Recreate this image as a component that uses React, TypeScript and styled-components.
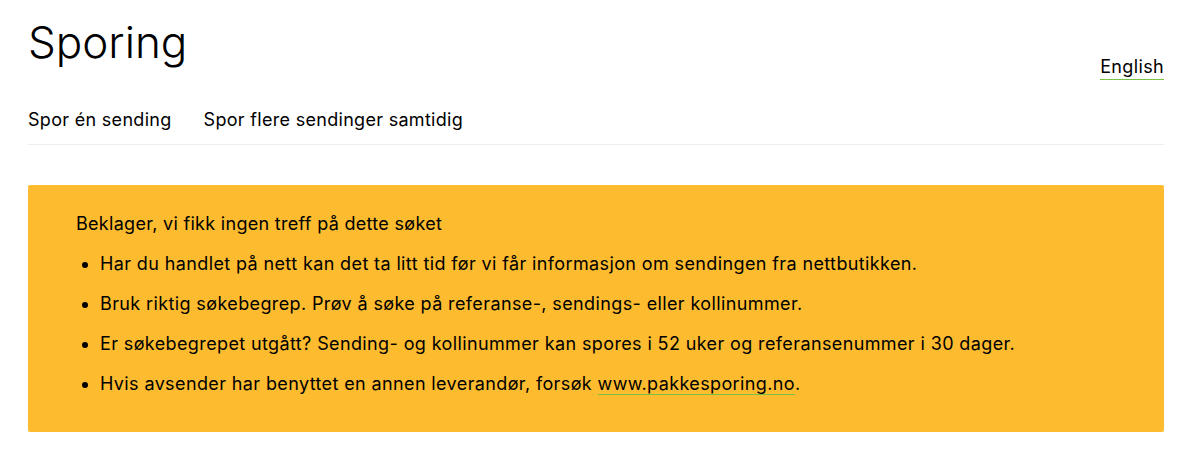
import React from "react";
import styled, { createGlobalStyle } from "styled-components";

const Global = createGlobalStyle`
  html, body { margin: 0; padding: 0; background: #fff; }
  body { font-family: Inter, "Noto Sans", sans-serif; color: #000; }
`;

const Page = styled.div`
  padding: 0 33px 0 28px;
`;

const Header = styled.header`
  display: flex;
  justify-content: space-between;
  align-items: flex-end;
`;

const Title = styled.h1`
  margin: 14px 0 0;
  font-size: 44px;
  font-weight: 300;
  line-height: 56px;
  letter-spacing: 0;
`;

const LangLink = styled.a`
  font-size: 18px;
  line-height: 24px;
  letter-spacing: 0.35px;
  color: #000;
  text-decoration: none;
  border-bottom: 1px solid #7bc144;
  margin-bottom: -10px;
`;

const Tabs = styled.nav`
  display: flex;
  gap: 32px;
  margin-top: 38px;
  padding-bottom: 12px;
  border-bottom: 1px solid #eeeeee;
`;

const Tab = styled.a`
  font-size: 18px;
  line-height: 24px;
  letter-spacing: 0.3px;
  color: #000;
  text-decoration: none;
`;

const Notice = styled.section`
  margin-top: 40px;
  background: #fdbb30;
  border-radius: 2px;
  padding: 25px 48px 34px;
  height: 247px;
  box-sizing: border-box;
`;

const NoticeTitle = styled.p`
  margin: 0;
  font-size: 18px;
  line-height: 28px;
  letter-spacing: 0.3px;
`;

const List = styled.ul`
  margin: 12px 0 0;
  padding-left: 24px;
`;

const Item = styled.li`
  font-size: 18px;
  line-height: 28px;
  letter-spacing: 0.38px;
  margin-bottom: 12px;
  padding-left: 0;
`;

const Link = styled.a`
  color: #000;
  text-decoration: none;
  border-bottom: 1px solid #7bc144;
`;

export default function App() {
  return (
    <>
      <Global />
      <Page>
        <Header>
          <Title>Sporing</Title>
          <LangLink href="#">English</LangLink>
        </Header>
        <Tabs>
          <Tab href="#">Spor én sending</Tab>
          <Tab href="#">Spor flere sendinger samtidig</Tab>
        </Tabs>
        <Notice>
          <NoticeTitle>Beklager, vi fikk ingen treff på dette søket</NoticeTitle>
          <List>
            <Item>Har du handlet på nett kan det ta litt tid før vi får informasjon om sendingen fra nettbutikken.</Item>
            <Item>Bruk riktig søkebegrep. Prøv å søke på referanse-, sendings- eller kollinummer.</Item>
            <Item>Er søkebegrepet utgått? Sending- og kollinummer kan spores i 52 uker og referansenummer i 30 dager.</Item>
            <Item>
              Hvis avsender har benyttet en annen leverandør, forsøk <Link href="#">www.pakkesporing.no</Link>.
            </Item>
          </List>
        </Notice>
      </Page>
    </>
  );
}
